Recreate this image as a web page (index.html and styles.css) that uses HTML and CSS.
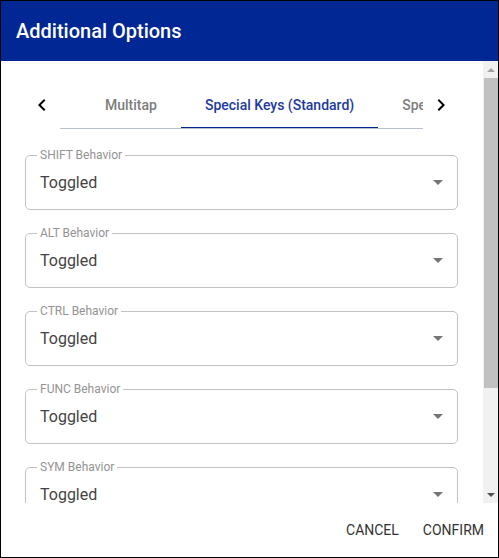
FILE: index.html
```html
<!DOCTYPE html>
<html>
<head>
<meta charset="utf-8">
<link rel="stylesheet" href="styles.css">
</head>
<body>
<div class="dialog">
  <div class="dialog-header">Additional Options</div>
  <div class="dialog-body">
    <div class="content">
      <div class="tab-header">
        <div class="pager">
          <svg width="24" height="24" viewBox="0 0 24 24"><path d="M15.41 7.41L14 6l-6 6 6 6 1.41-1.41L10.83 12z" fill="#000"/></svg>
        </div>
        <div class="tab-track">
          <div class="tab-list">
            <div class="tab">Multitap</div>
            <div class="tab active">Special Keys (Standard)</div>
            <div class="tab">Special Keys (Extended)</div>
          </div>
        </div>
        <div class="pager">
          <svg width="24" height="24" viewBox="0 0 24 24"><path d="M10 6L8.59 7.41 13.170 12l-4.58 4.59L10 18l6-6z" fill="#000"/></svg>
        </div>
      </div>

      <fieldset class="field">
        <legend>SHIFT Behavior</legend>
        <div class="select"><span class="value">Toggled</span><span class="arrow"></span></div>
      </fieldset>
      <fieldset class="field">
        <legend>ALT Behavior</legend>
        <div class="select"><span class="value">Toggled</span><span class="arrow"></span></div>
      </fieldset>
      <fieldset class="field">
        <legend>CTRL Behavior</legend>
        <div class="select"><span class="value">Toggled</span><span class="arrow"></span></div>
      </fieldset>
      <fieldset class="field">
        <legend>FUNC Behavior</legend>
        <div class="select"><span class="value">Toggled</span><span class="arrow"></span></div>
      </fieldset>
      <fieldset class="field">
        <legend>SYM Behavior</legend>
        <div class="select"><span class="value">Toggled</span><span class="arrow"></span></div>
      </fieldset>
    </div>
    <div class="scrollbar">
      <div class="sb-btn"><span class="sb-up"></span></div>
      <div class="sb-track"><div class="sb-thumb"></div></div>
      <div class="sb-btn"><span class="sb-down"></span></div>
    </div>
  </div>
  <div class="dialog-footer">
    <button class="btn">CANCEL</button>
    <button class="btn">CONFIRM</button>
  </div>
</div>
</body>
</html>
```

FILE: styles.css
```css
* { box-sizing: border-box; }
html, body { margin: 0; padding: 0; background: #fff; }
body { font-family: Roboto, "Liberation Sans", sans-serif; }

.dialog {
  width: 499px;
  height: 558px;
  border: 1px solid #000;
  display: flex;
  flex-direction: column;
  background: #fff;
  overflow: hidden;
}

.dialog-header {
  height: 60px;
  flex: none;
  background: #002794;
  color: #fff;
  font-size: 20px;
  font-weight: 500;
  display: flex;
  align-items: center;
  padding-left: 15px;
  padding-bottom: 1px;
}

.dialog-body {
  flex: none;
  height: 442px;
  display: flex;
}

.content {
  flex: 1;
  overflow: hidden;
  padding: 20px 25px 0 23px;
}

.tab-header {
  display: flex;
  height: 48px;
}

.pager {
  width: 36px;
  flex: none;
  display: flex;
  align-items: center;
  justify-content: center;
}
.pager:last-child { width: 35px; justify-content: flex-start; padding-left: 6px; }

.tab-track {
  flex: 1;
  overflow: hidden;
  border-bottom: 1px solid #b8bfcf;
}

.tab-list {
  display: flex;
  height: 100%;
  padding-left: 21px;
}

.tab {
  flex: none;
  height: 47px;
  padding: 0 24px;
  display: flex;
  align-items: center;
  font-size: 14px;
  font-weight: 500;
  color: #7d7d7d;
  white-space: nowrap;
}
.tab.active {
  color: #1d3a9e;
  border-bottom: 2px solid #002794;
  padding-top: 2px;
  height: 48px;
}

.field {
  margin: 19px 0 0 1px;
  padding: 0 14px 7px 14px;
  border: 1px solid #c2c2c2;
  border-radius: 5px;
  min-width: 0;
}
.field + .field { margin-top: 16px; }

.field legend {
  font-size: 12px;
  line-height: 14px;
  color: #939393;
  padding: 0 3px;
  margin-left: -3px;
}

.select {
  height: 40px;
  display: flex;
  align-items: center;
}
.value {
  flex: 1;
  font-size: 16px;
  color: #444;
}
.arrow {
  width: 0;
  height: 0;
  border-left: 5px solid transparent;
  border-right: 5px solid transparent;
  border-top: 5px solid #757575;
  margin-top: 1px;
}

.scrollbar {
  width: 15px;
  flex: none;
  background: #f1f1f1;
  display: flex;
  flex-direction: column;
}
.sb-btn {
  height: 17px;
  flex: none;
  display: flex;
  align-items: center;
  justify-content: center;
}
.sb-up {
  width: 0; height: 0;
  border-left: 4px solid transparent;
  border-right: 4px solid transparent;
  border-bottom: 4px solid #a3a3a3;
}
.sb-down {
  width: 0; height: 0;
  border-left: 4px solid transparent;
  border-right: 4px solid transparent;
  border-top: 4px solid #505050;
}
.sb-track {
  flex: 1;
  padding: 0 0 0 1px;
}
.sb-thumb {
  height: 310px;
  background: #c1c1c1;
}

.dialog-footer {
  flex: 1;
  display: flex;
  justify-content: flex-end;
  align-items: center;
  gap: 8px;
  padding-right: 6px;
}
.btn {
  font-family: Roboto, "Liberation Sans", sans-serif;
  font-size: 14px;
  font-weight: 400;
  color: #333;
  background: none;
  border: none;
  height: 36px;
  padding: 0 8px;
  cursor: pointer;
}
```
